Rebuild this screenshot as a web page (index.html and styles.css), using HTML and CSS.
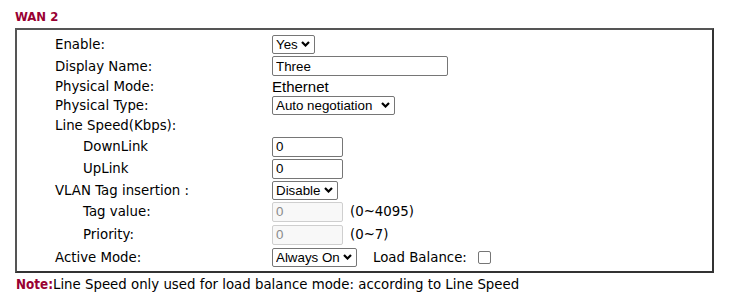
FILE: index.html
```html
<!DOCTYPE html>
<html>
<head>
<meta charset="utf-8">
<link rel="stylesheet" href="styles.css">
</head>
<body>
<div class="page">
  <div class="title">WAN 2</div>
  <div class="panel">
    <div class="row h22"><div class="lbl">Enable:</div><div class="ctl"><span class="selwrap"><select class="sel w-yes"><option>Yes</option></select><svg class="chev" width="9" height="6" viewBox="0 0 9 6"><path d="M1 1 L4.5 4.5 L8 1" fill="none" stroke="#000" stroke-width="2.2"/></svg></span></div></div>
    <div class="row h22"><div class="lbl">Display Name:</div><div class="ctl"><input class="inp w-name" type="text" value="Three"></div></div>
    <div class="row h18"><div class="lbl">Physical Mode:</div><div class="ctl"><span class="txt plain">Ethernet</span></div></div>
    <div class="row h20"><div class="lbl">Physical Type:</div><div class="ctl"><span class="selwrap"><select class="sel w-auto"><option>Auto negotiation</option></select><svg class="chev" width="9" height="6" viewBox="0 0 9 6"><path d="M1 1 L4.5 4.5 L8 1" fill="none" stroke="#000" stroke-width="2.2"/></svg></span></div></div>
    <div class="row h21"><div class="lbl">Line Speed(Kbps):</div><div class="ctl"></div></div>
    <div class="row h21"><div class="lbl sub">DownLink</div><div class="ctl"><input class="inp w-num" type="text" value="0"></div></div>
    <div class="row h23"><div class="lbl sub">UpLink</div><div class="ctl"><input class="inp w-num" type="text" value="0"></div></div>
    <div class="row h20"><div class="lbl">VLAN Tag insertion :</div><div class="ctl"><span class="selwrap"><select class="sel w-dis"><option>Disable</option></select><svg class="chev" width="9" height="6" viewBox="0 0 9 6"><path d="M1 1 L4.5 4.5 L8 1" fill="none" stroke="#000" stroke-width="2.2"/></svg></span></div></div>
    <div class="row h23"><div class="lbl sub">Tag value:</div><div class="ctl"><input class="inp w-num" type="text" value="0" disabled><span class="txt range">(0~4095)</span></div></div>
    <div class="row h23"><div class="lbl sub">Priority:</div><div class="ctl"><input class="inp w-num" type="text" value="0" disabled><span class="txt range">(0~7)</span></div></div>
    <div class="row h23"><div class="lbl">Active Mode:</div><div class="ctl"><span class="selwrap"><select class="sel w-on"><option>Always On</option></select><svg class="chev" width="9" height="6" viewBox="0 0 9 6"><path d="M1 1 L4.5 4.5 L8 1" fill="none" stroke="#000" stroke-width="2.2"/></svg></span><span class="txt lb">Load Balance:</span><input class="chk" type="checkbox"></div></div>
  </div>
  <div class="note"><span class="note-key">Note:</span>Line Speed only used for load balance mode: according to Line Speed</div>
</div>
</body>
</html>
```

FILE: styles.css
```css
html, body {
  margin: 0;
  padding: 0;
  background: #fff;
}
.page {
  padding: 9px 0 0 15px;
  width: 699px;
  font-family: "DejaVu Sans", Verdana, sans-serif;
  font-size: 13.33px;
  color: #000;
}
.title {
  font-family: "DejaVu Sans Condensed", "DejaVu Sans", sans-serif;
  font-weight: bold;
  font-size: 13px;
  line-height: 16px;
  height: 16px;
  color: #990033;
  margin-bottom: 3px;
}
.panel {
  border: 2px solid #555;
  border-right-color: #333;
  border-bottom-color: #333;
  padding: 3px 0 2px 0;
}
.row {
  display: grid;
  grid-template-columns: 255px 1fr;
  align-items: center;
}
.h18 { height: 18px; }
.h20 { height: 20px; }
.h21 { height: 21px; }
.h22 { height: 22px; }
.h23 { height: 23px; }
.lbl {
  padding-left: 38px;
  white-space: nowrap;
}
.lbl.sub {
  padding-left: 66px;
}
.ctl {
  display: flex;
  align-items: center;
}
.txt {
  white-space: nowrap;
}
.plain {
  font-family: "Liberation Sans", Arial, sans-serif;
  font-size: 15px;
}
.range {
  margin-left: 7px;
}
.lb {
  margin-left: 16px;
}
.selwrap {
  position: relative;
  display: inline-flex;
}
.sel {
  appearance: none;
  -webkit-appearance: none;
  box-sizing: border-box;
  height: 19px;
  margin: 0;
  border: 1px solid #767676;
  border-radius: 2px;
  background: #fff;
  color: #000;
  font-family: "Liberation Sans", Arial, sans-serif;
  font-size: 13.33px;
  padding: 0 0 0 3px;
  line-height: 17px;
}
.chev {
  position: absolute;
  right: 5px;
  top: 6px;
  pointer-events: none;
}
.w-yes { width: 43px; }
.w-auto { width: 123px; }
.w-dis { width: 66px; }
.w-on { width: 85px; }
.inp {
  box-sizing: border-box;
  height: 20px;
  margin: 0;
  border: 1px solid #767676;
  border-radius: 2px;
  padding: 0 3px;
  font-family: "Liberation Sans", Arial, sans-serif;
  font-size: 13.33px;
  color: #000;
  background: #fff;
}
.inp:disabled {
  background: #f8f8f8;
  border-color: #cfcfcf;
  color: #8a8a8a;
}
.w-name { width: 176px; }
.w-num { width: 71px; }
.chk {
  appearance: none;
  -webkit-appearance: none;
  box-sizing: border-box;
  width: 13px;
  height: 13px;
  margin: 0 0 0 11px;
  border: 1px solid #767676;
  border-radius: 2px;
  background: #fff;
}
.note {
  margin-top: 3px;
  line-height: 18px;
  padding-left: 1px;
  white-space: nowrap;
}
.note-key {
  font-family: "DejaVu Sans Condensed", "DejaVu Sans", sans-serif;
  font-weight: bold;
  color: #990033;
}
```
